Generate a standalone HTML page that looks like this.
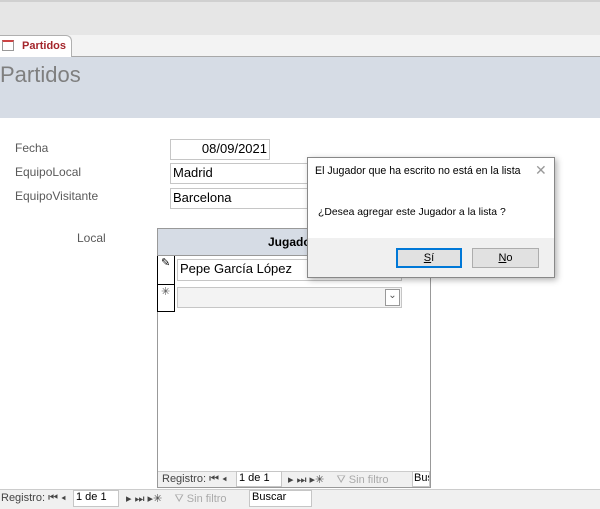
<!DOCTYPE html><html><head><style>
body{margin:0;width:600px;height:509px;position:relative;overflow:hidden;background:#fff;font-family:"Liberation Sans",sans-serif;font-size:12px}
div{position:absolute;box-sizing:border-box}
.lbl{color:#595959;font-size:12px}
.box{border:1px solid #c6c6c6;background:#fff;font-size:13px;padding:1px 2px;color:#000}
.nav{font-size:11px;color:#444;white-space:nowrap}
</style></head><body>
<div style="left:0;top:0;width:600px;height:35px;background:#e6e6e6;border-top:2px solid #d0d0d0"></div>
<div style="left:0;top:35px;width:600px;height:22px;background:#f3f3f3;border-bottom:1px solid #a8a8a8"></div>
<div style="left:0;top:35px;width:72px;height:22px;background:#fff;border:1px solid #b0b0b0;border-left:none;border-bottom:none;border-radius:0 6px 0 0"></div>
<div style="left:2px;top:40px;width:12px;height:11px;border:1px solid #999;border-top:2px solid #c44"></div>
<div style="left:22px;top:40px;color:#a4262c;font-weight:bold;font-size:11px">Partidos</div>
<div style="left:0;top:57px;width:600px;height:61px;background:#d6dce5"></div>
<div style="left:0;top:62px;font-size:22px;color:#7f7f7f">Partidos</div>
<div class="lbl" style="left:15px;top:141px">Fecha</div>
<div class="lbl" style="left:15px;top:165px">EquipoLocal</div>
<div class="lbl" style="left:15px;top:189px">EquipoVisitante</div>
<div class="lbl" style="left:77px;top:231px">Local</div>
<div class="box" style="left:170px;top:139px;width:100px;height:21px;text-align:right">08/09/2021</div>
<div class="box" style="left:170px;top:163px;width:140px;height:21px">Madrid</div>
<div class="box" style="left:170px;top:188px;width:140px;height:21px">Barcelona</div>
<div style="left:157px;top:228px;width:274px;height:260px;border:1px solid #999;border-top:none"></div>
<div style="left:157px;top:228px;width:274px;height:28px;background:#d6dce5;border:1px solid #999;font-weight:bold;font-size:12px;padding:6px 0 0 110px">Jugado</div>
<div style="left:157px;top:256px;width:18px;height:56px;border:1px solid #000;border-top:none"></div>
<div style="left:157px;top:284px;width:18px;height:1px;background:#000"></div>
<div style="left:161px;top:256px;font-size:11px">✎</div>
<div style="left:161px;top:285px;font-size:11px;color:#555">✳</div>
<div class="box" style="left:177px;top:259px;width:225px;height:22px">Pepe García López</div>
<div class="box" style="left:177px;top:287px;width:225px;height:21px;background:#f3f3f3"></div>
<div style="left:385px;top:289px;width:15px;height:17px;border:1px solid #999;background:#fff;font-size:10px;text-align:center;color:#555">⌄</div>
<div style="left:158px;top:471px;width:272px;height:16px;background:#f0f0f0;border-top:1px solid #ccc"></div>
<div class="nav" style="left:162px;top:473px">Registro: ⏮ ◂ </div>
<div class="box" style="left:236px;top:471px;width:46px;height:16px;font-size:11px;padding:0 2px">1 de 1</div>
<div class="nav" style="left:288px;top:473px">▸ ⏭ ▸✳ &nbsp;&nbsp; <span style="color:#aaa">⛛ Sin filtro</span></div>
<div class="box" style="left:412px;top:471px;width:18px;height:16px;font-size:11px;padding:0 1px;overflow:hidden">Bus</div>
<div style="left:0;top:489px;width:600px;height:20px;background:#f0f0f0;border-top:1px solid #ccc"></div>
<div class="nav" style="left:1px;top:492px">Registro: ⏮ ◂</div>
<div class="box" style="left:73px;top:490px;width:46px;height:17px;font-size:11px;padding:0 2px">1 de 1</div>
<div class="nav" style="left:126px;top:492px">▸ ⏭ ▸✳ &nbsp;&nbsp; <span style="color:#aaa">⛛ Sin filtro</span></div>
<div class="box" style="left:249px;top:490px;width:63px;height:17px;font-size:11px;padding:0 2px">Buscar</div>
<div style="left:307px;top:157px;width:248px;height:121px;background:#fff;border:1px solid #888;box-shadow:2px 2px 6px rgba(0,0,0,.3)"></div>
<div style="left:315px;top:165px;font-size:10.6px">El Jugador que ha escrito no está en la lista</div>
<div style="left:535px;top:162px;font-size:14px;color:#999">✕</div>
<div style="left:318px;top:207px;font-size:10.4px">¿Desea agregar este Jugador a la lista ?</div>
<div style="left:308px;top:238px;width:246px;height:39px;background:#f0f0f0"></div>
<div style="left:396px;top:248px;width:66px;height:20px;border:2px solid #0078d7;background:#e1e1e1;font-size:11px;text-align:center;padding-top:2px"><u>S</u>í</div>
<div style="left:472px;top:248px;width:67px;height:20px;border:1px solid #adadad;background:#e1e1e1;font-size:11px;text-align:center;padding-top:3px"><u>N</u>o</div>
</body></html>
